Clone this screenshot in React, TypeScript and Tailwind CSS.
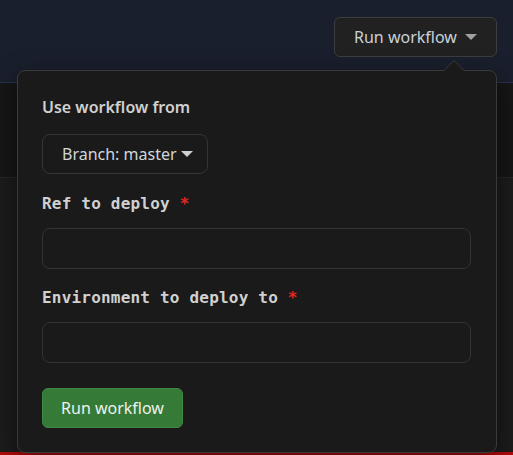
import { useState } from 'react'

function Caret({ className = '' }: { className?: string }) {
  return (
    <svg width="12" height="6" viewBox="0 0 12 6" className={className}>
      <path d="M0 0h12L6 6z" fill="currentColor" />
    </svg>
  )
}

export default function App() {
  const [ref, setRef] = useState('')
  const [env, setEnv] = useState('')

  return (
    <div className="relative w-[513px] h-[455px] overflow-hidden bg-[#161616] font-['Noto_Sans',sans-serif]">
      {/* page header */}
      <header className="h-[83px] bg-[#1a1f2d] border-b border-[#26344f] flex justify-end items-start pt-[17px] pr-4">
        <button className="h-10 w-[163px] flex items-center justify-between pl-[19px] pr-[19px] rounded-md bg-[#212121] border border-[#3d3d3d] text-[16px] text-[#c9d1d9]">
          Run workflow
          <Caret className="text-[#a0a0a0]" />
        </button>
      </header>

      <div className="h-[95px] border-b border-[#262626]" />
      <div className="h-[274px] bg-[#1c1c1c]" />
      <div className="absolute bottom-0 left-0 right-0 h-[3px] bg-[#b40b0b]" />

      {/* popover */}
      <div className="absolute left-[17px] top-[70px] w-[480px] h-[383px] rounded-lg bg-[#1a1a1a] border border-[#3a3a3a] shadow-[0_8px_24px_rgba(0,0,0,0.5)] px-[24px] pt-[24px]">
        <div className="absolute -top-[11px] right-[31px] w-0 h-0 border-l-[11px] border-r-[11px] border-b-[11px] border-l-transparent border-r-transparent border-b-[#3a3a3a]" />
        <div className="absolute -top-[10px] right-[32px] w-0 h-0 border-l-[10px] border-r-[10px] border-b-[10px] border-l-transparent border-r-transparent border-b-[#1a1a1a]" />

        <p className="text-[16px] font-semibold text-[#d0d0d0] leading-[24px]">Use workflow from</p>

        <button className="mt-[15px] h-10 w-[166px] flex items-center gap-1 pl-[19px] rounded-lg border border-[#363636] bg-[#1a1a1a] text-[16px] text-[#d0d6dc]">
          Branch: master
          <Caret className="text-[#d0d0d0]" />
        </button>

        <label className="block mt-[18px] font-['DejaVu_Sans_Mono',monospace] font-bold text-[16px] tracking-[0.2px] leading-[24px] text-[#d0d0d0]">
          Ref to deploy <span className="text-[#e5261f]">*</span>
        </label>
        <input
          value={ref}
          onChange={(e) => setRef(e.target.value)}
          className="mt-[12px] block w-[429px] h-[41px] rounded-lg border border-[#333] bg-[#1a1a1a] px-3 text-[#ddd] outline-none"
        />

        <label className="block mt-[17px] font-['DejaVu_Sans_Mono',monospace] font-bold text-[16px] tracking-[0.2px] leading-[24px] text-[#d0d0d0]">
          Environment to deploy to <span className="text-[#e5261f]">*</span>
        </label>
        <input
          value={env}
          onChange={(e) => setEnv(e.target.value)}
          className="mt-[12px] block w-[429px] h-[41px] rounded-lg border border-[#333] bg-[#1a1a1a] px-3 text-[#ddd] outline-none"
        />

        <button className="mt-[25px] h-10 w-[141px] rounded-md bg-[#367a38] border border-[#3f8a42] text-[16px] text-[#eef3ee]">
          Run workflow
        </button>
      </div>
    </div>
  )
}
